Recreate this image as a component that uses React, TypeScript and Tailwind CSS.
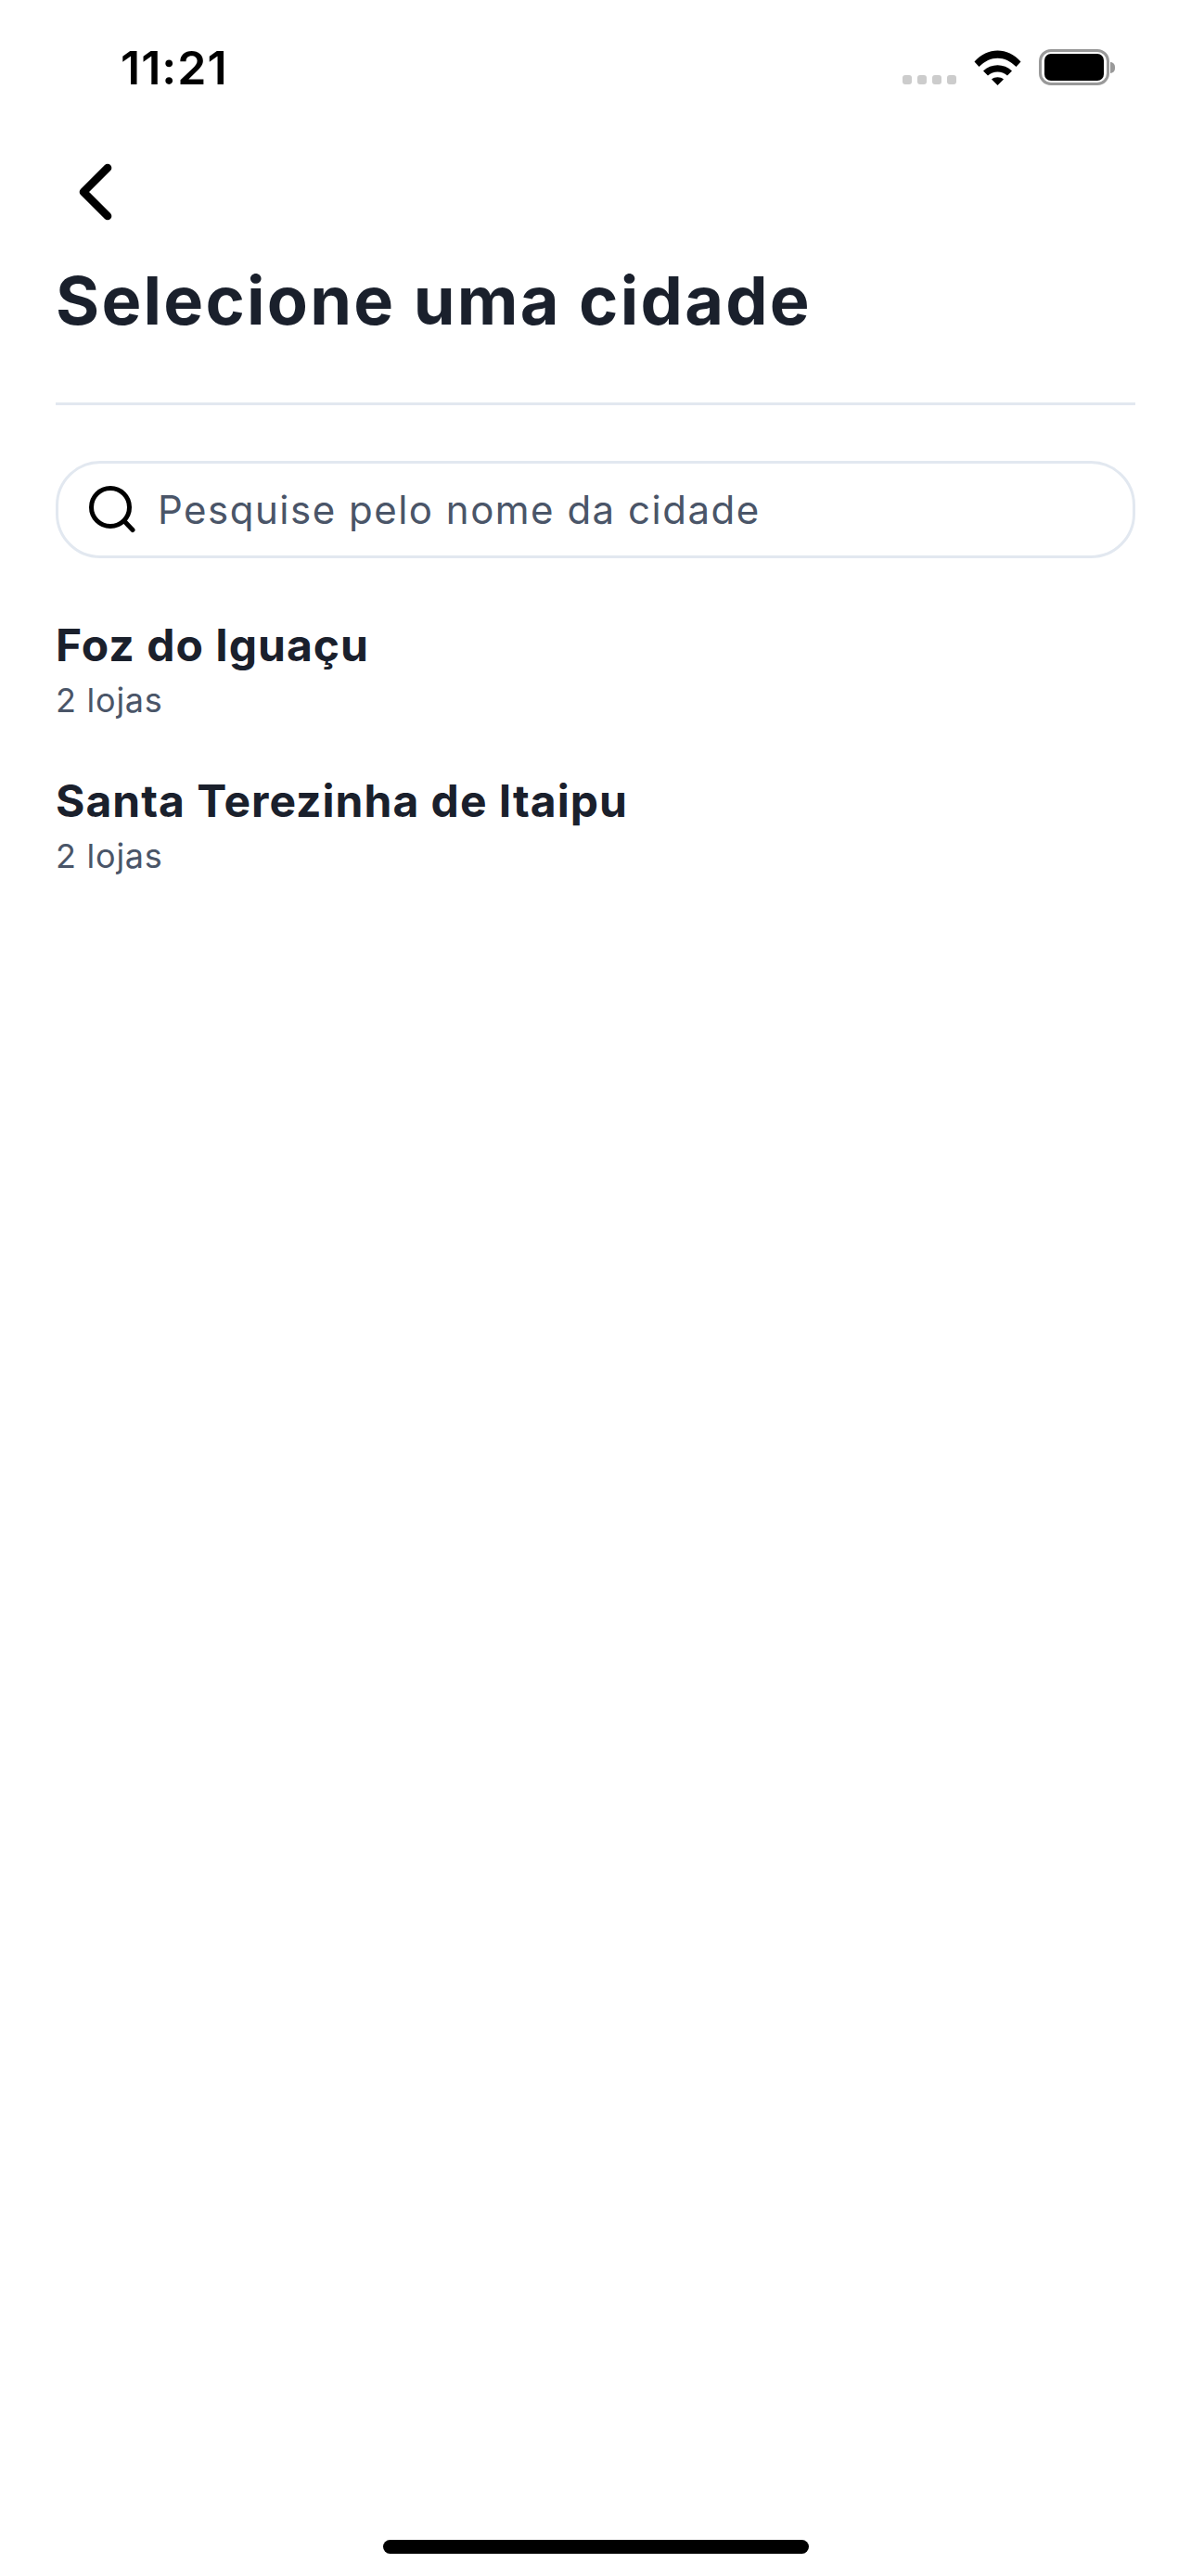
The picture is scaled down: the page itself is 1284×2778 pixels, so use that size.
import { ChevronLeft } from "lucide-react";

const CITIES = [
  { name: "Foz do Iguaçu", stores: "2 lojas" },
  { name: "Santa Terezinha de Itaipu", stores: "2 lojas" },
];

function StatusBar() {
  return (
    <div className="flex h-[148px] items-start justify-between pl-[130px] pr-[82px] pt-[43px]">
      <span className="font-['Inter',sans-serif] text-[50px] leading-[60px] font-semibold tracking-[1px] text-black">
        11:21
      </span>
      <div className="flex items-start pt-[10px]">
        {/* signal dots */}
        <div className="mr-[19px] mt-[28px] flex gap-[6px]">
          <span className="h-[10px] w-[10px] rounded-[3px] bg-[#cccccc]" />
          <span className="h-[10px] w-[10px] rounded-[3px] bg-[#cccccc]" />
          <span className="h-[10px] w-[10px] rounded-[3px] bg-[#cccccc]" />
          <span className="h-[10px] w-[10px] rounded-[3px] bg-[#cccccc]" />
        </div>
        <svg width="51" height="38" viewBox="0 0 50 38" className="mr-[19px] mt-[1px]">
          <path d="M0 12.500C14-3.500 36-3.500 50 12.500L45 18C33 5.500 17 5.500 5 18Z" fill="#000" />
          <path d="M9.500 22.500C18 14 32 14 40.500 22.500L35.500 27.500C29.500 22 20.500 22 14.500 27.500Z" fill="#000" />
          <path d="M18.500 31.500C22 28.500 28 28.500 31.500 31.500L25 38Z" fill="#000" />
        </svg>
        <div className="flex items-center">
          <div className="h-[39px] w-[76px] rounded-[13px] border-[3px] border-[#999999] px-[3px] py-[2px]">
            <div className="h-full w-full rounded-[7px] bg-black" />
          </div>
          <span className="ml-[1px] h-[12px] w-[5px] rounded-r-full bg-[#999999]" />
        </div>
      </div>
    </div>
  );
}

function SearchIcon() {
  return (
    <svg width="50" height="51" viewBox="0 0 50 51" fill="none" stroke="#000" strokeWidth="5" strokeLinecap="round" className="shrink-0">
      <circle cx="23" cy="23" r="20.500" />
      <path d="M38 38L47 47.500" />
    </svg>
  );
}

export default function App() {
  return (
    <div className="flex min-h-[2778px] flex-col bg-white font-['Inter',sans-serif]">
      <StatusBar />
      <main className="flex-1 px-[60px]">
        <button className="mt-[28px] flex h-[62px] items-center">
          <ChevronLeft size={104} strokeWidth={2} color="#000" className="-ml-[9px]" />
        </button>
        <h1 className="mt-[32px] text-[72px] leading-[108px] font-bold tracking-[2.25px] text-[#1a202c]">
          Selecione uma cidade
        </h1>
        <hr className="mt-[56px] border-t-[3px] border-[#e2e8f0]" />
        <div className="mt-[60px] flex h-[105px] items-center gap-[24px] rounded-[48px] border-[3px] border-[#e2e8f0] pl-[33px]">
          <SearchIcon />
          <span className="text-[42px] leading-[60px] tracking-[1.5px] text-[#4a5568]">Pesquise pelo nome da cidade</span>
        </div>
        <ul className="mt-[58px] flex flex-col gap-[46px]">
          {CITIES.map((c) => (
            <li key={c.name}>
              <p className="text-[48px] leading-[72px] font-bold tracking-[1px] text-[#1a202c]">{c.name}</p>
              <p className="-mt-[4px] text-[36px] leading-[54px] tracking-[0.75px] text-[#4a5568]">{c.stores}</p>
            </li>
          ))}
        </ul>
      </main>
      <div className="flex justify-center pb-[24px]">
        <div className="h-[15px] w-[459px] rounded-full bg-black" />
      </div>
    </div>
  );
}
